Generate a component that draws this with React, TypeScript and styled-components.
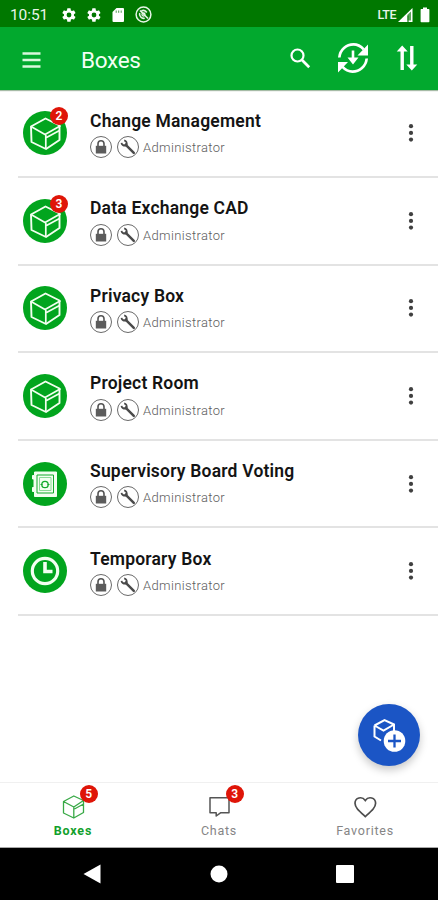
import React from 'react';
import styled, { createGlobalStyle } from 'styled-components';

const GlobalStyle = createGlobalStyle`
  * { box-sizing: border-box; }
  body { margin: 0; background: #fff; font-family: Roboto, "Liberation Sans", sans-serif; }
  svg { display: block; flex: none; }
`;

const Screen = styled.div`
  width: 438px;
  height: 900px;
  display: flex;
  flex-direction: column;
  position: relative;
  overflow: hidden;
  background: #fff;
`;

const StatusBar = styled.div`
  height: 27px;
  flex: none;
  display: flex;
  align-items: center;
  padding: 2px 8px 0 10px;
  background: #007800;
  color: #e9f5e9;
  font-size: 15.5px;
  letter-spacing: -0.1px;
`;

const StatusIcons = styled.div`
  display: flex;
  align-items: center;
  gap: 8.5px;
  margin-left: 13px;
`;

const SignalGroup = styled.div`
  display: flex;
  align-items: center;
  margin-left: auto;
  font-size: 12.5px;
  font-weight: 500;
  letter-spacing: -0.5px;
`;

const SignalSlot = styled.span`
  margin: 0 7px 0 2px;
`;

const AppBar = styled.header`
  height: 62.5px;
  flex: none;
  display: flex;
  align-items: center;
  padding: 0 20px 0 22px;
  background: #02a92e;
  color: #f4fff4;
  box-shadow: 0 1px 1px rgba(0, 60, 0, 0.35);
  z-index: 1;
`;

const AppTitle = styled.h1`
  margin: 3px 0 0 40px;
  font-size: 22.5px;
  font-weight: 450;
  letter-spacing: -0.3px;
  flex: 1;
`;

const Actions = styled.div`
  display: flex;
  align-items: center;
`;

const MenuSlot = styled.div`
  margin-top: 3px;
`;

const SearchSlot = styled.div`
  margin-right: 26px;
`;

const SyncSlot = styled.div`
  margin-right: 27px;
`;

const List = styled.ul`
  flex: 1;
  margin: 0;
  padding: 1px 0 0 18px;
  list-style: none;
`;

const Row = styled.li`
  height: 87.6px;
  display: flex;
  align-items: center;
  padding: 0 18px 0 5px;
  border-bottom: 2px solid #e3e3e3;
`;

const Avatar = styled.div`
  position: relative;
  width: 44px;
  height: 44px;
  border-radius: 50%;
  background: #02a51e;
`;

const Badge = styled.span<{ $top: number; $left: number }>`
  position: absolute;
  top: ${(p) => p.$top}px;
  left: ${(p) => p.$left}px;
  width: 18px;
  height: 18px;
  border-radius: 50%;
  background: #df1508;
  color: #fff;
  font-size: 12px;
  font-weight: 600;
  line-height: 18px;
  text-align: center;
`;

const RowBody = styled.div`
  flex: 1;
  margin-left: 23px;
  padding-top: 1px;
`;

const RowTitle = styled.div`
  font-size: 17.5px;
  font-weight: 600;
  line-height: 22px;
  letter-spacing: 0.2px;
  color: #141414;
`;

const Meta = styled.div`
  display: flex;
  align-items: center;
  margin-top: 4.5px;
  color: #5c5c5c;
  font-size: 13px;
  font-weight: 300;
  letter-spacing: 0.35px;
`;

const MetaIcon = styled.span`
  width: 22px;
  height: 22px;
  margin-right: 5px;
  border: 1px solid #6a6a6a;
  border-radius: 50%;
  display: grid;
  place-items: center;
`;

const Role = styled.span`
  margin: 1px 0 0 -1px;
`;

const MoreSlot = styled.span`
  margin-right: 6px;
`;

const Fab = styled.button`
  position: absolute;
  left: 358px;
  top: 704px;
  width: 62px;
  height: 62px;
  padding: 0;
  border: 0;
  border-radius: 50%;
  background: #1b55c5;
  box-shadow: 0 4px 8px rgba(0, 0, 0, 0.22);
`;

const TabBar = styled.nav`
  height: 66px;
  flex: none;
  display: grid;
  grid-template-columns: repeat(3, 1fr);
  border-top: 1px solid #f0f0f0;
  border-bottom: 1px solid #a8a8a8;
`;

const Tab = styled.div<{ $active?: boolean }>`
  display: flex;
  flex-direction: column;
  align-items: center;
  padding-top: 11px;
  font-size: 12.5px;
  line-height: 16px;
  letter-spacing: ${(p) => (p.$active ? 0.8 : 0.75)}px;
  font-weight: ${(p) => (p.$active ? 700 : 400)};
  color: ${(p) => (p.$active ? '#12a02c' : '#858585')};
`;

const TabIcon = styled.div`
  position: relative;
  width: 26px;
  height: 26px;
  margin-bottom: 3px;
`;

const SystemNav = styled.div`
  height: 52px;
  flex: none;
  display: flex;
  align-items: center;
  justify-content: space-between;
  padding: 0 84px 0 83px;
  background: #000;
`;

const Gear = () => (
  <svg width="16" height="16" viewBox="0 0 24 24" fill="#fff">
    <path d="M19.4 13a7.6 7.6 0 0 0 0-2l2.1-1.6a.5.5 0 0 0 .1-.7l-2-3.400a.5.5 0 0 0-.6-.2l-2.500 1a7.300 7.300 0 0 0-1.700-1L14.400 2.400a.5.5 0 0 0-.5-.4h-4a.5.5 0 0 0-.5.400L9 5.100a7.300 7.300 0 0 0-1.700 1l-2.500-1a.5.5 0 0 0-.6.2l-2 3.400a.5.5 0 0 0 .1.700L4.500 11a7.600 7.600 0 0 0 0 2l-2.200 1.600a.5.5 0 0 0-.1.700l2 3.400c.1.200.4.300.6.200l2.500-1a7.300 7.300 0 0 0 1.700 1l.4 2.700c0 .2.200.4.500.4h4c.2 0 .5-.2.500-.4l.4-2.700a7.300 7.300 0 0 0 1.700-1l2.500 1c.2.100.5 0 .6-.2l2-3.400a.5.5 0 0 0-.1-.7zM12 15.600a3.600 3.600 0 1 1 0-7.200 3.600 3.600 0 0 1 0 7.200z" />
  </svg>
);

const SdCard = () => (
  <svg width="16" height="16" viewBox="0 0 16 16">
    <path d="M6.500 1H13q1 0 1 1v12q0 1-1 1H3.500q-1 0-1-1V5z" fill="#fff" />
    <path d="M6.200 3.500v2.300M8.700 3.500v2.300M11.200 3.500v2.300" stroke="#4d994d" strokeWidth="1" />
  </svg>
);

const NoSync = () => (
  <svg width="17" height="17" viewBox="0 0 17 17" fill="none" stroke="#e6f5e6">
    <circle cx="8.500" cy="8.500" r="7.400" strokeWidth="1.500" />
    <path d="M5 4.500l8 8M11.800 6.500A4.200 4.200 0 0 0 6.500 4.800M4.700 7a4.200 4.200 0 0 0 5 5.200" strokeWidth="1.600" />
    <circle cx="8.500" cy="8.500" r="1.500" strokeWidth="1.300" />
  </svg>
);

const Signal = () => (
  <svg width="15" height="14" viewBox="0 0 15 14">
    <path d="M0 14L14.500 0v14z" fill="#fff" />
    <path d="M9.500 6.800L13 3.500V12.500H9.500z" fill="#5ba55b" />
    <path d="M10 7.500v6.500" stroke="#167f16" strokeWidth="1.200" />
  </svg>
);

const Battery = () => (
  <svg width="10" height="16" viewBox="0 0 10 16">
    <path d="M3 .5h4v1.500h1.800q.6 0 .6.800v11.700q0 .8-.8.800H1.400q-.8 0-.8-.8V2.800q0-.8.6-.8H3z" fill="#fff" />
  </svg>
);

const MenuIcon = () => (
  <svg width="19" height="18" viewBox="0 0 19 18">
    <path d="M0.500 2.500h18M0.500 9h18M0.500 15.500h18" stroke="#d9f8dc" strokeWidth="2.300" />
  </svg>
);

const SearchIcon = () => (
  <svg width="22" height="22" viewBox="0 0 22 22" fill="none" stroke="#fff">
    <circle cx="8.500" cy="8.500" r="6" strokeWidth="2.200" />
    <path d="M13 13l7.200 7.200" strokeWidth="2.700" />
  </svg>
);

const SyncIcon = () => (
  <svg width="32" height="32" viewBox="0 0 32 32">
    <g fill="none" stroke="#fff" strokeWidth="2.700">
      <path d="M2.300 15.500C3 7.500 9.500 2.300 16.500 2.300c4.300 0 7.500 2 10.200 5" />
      <path d="M29.700 16.500C29 24.500 22.500 29.700 15.500 29.700c-4.300 0-7.500-2-10.200-5" />
      <path d="M16 8.500v9" strokeWidth="2.600" />
    </g>
    <path d="M31 2.500V13.500H20.500zM1 30.500V20H11zM10.500 15.500h11L16 22.500z" fill="#fff" />
  </svg>
);

const SortIcon = () => (
  <svg width="22" height="26" viewBox="0 0 22 26">
    <path d="M6.200 25V4M15.800 1v21" stroke="#fff" strokeWidth="3.400" fill="none" />
    <path d="M6.200 .5l5.500 6H.7zM15.800 25.500l5.500-6h-11z" fill="#fff" />
  </svg>
);

const BoxGlyph = () => (
  <svg width="44" height="44" viewBox="0 0 44 44" fill="none" stroke="#f3fff0" strokeWidth="1.700" strokeLinejoin="round">
    <path d="M8 15.500L22.500 7.500 36.500 14.500V29L23 38 8.500 31z" strokeWidth="1.900" />
    <path d="M8 15.500L22 23.500 37.500 14.800M22.800 24v13.500M23.500 26.500L36.500 19.500" />
  </svg>
);

const SafeGlyph = () => (
  <svg width="44" height="44" viewBox="0 0 44 44" fill="none">
    <path d="M11.500 10H33.500v24.500H11.500V29.500H9.500V25.500H11V17H9.500V13.500H11.500z" fill="#f3fff0" stroke="#f3fff0" strokeLinejoin="round" />
    <path d="M14 13h16.500v18H14z" stroke="#12a92b" strokeWidth="1" />
    <path d="M16.500 15.500h11.500v13H16.500z" stroke="#8bd996" strokeWidth="1" />
    <circle cx="22" cy="22.500" r="3.200" stroke="#12a92b" strokeWidth="1.300" />
    <path d="M17.500 22.500h2M24.500 22.500h2" stroke="#12a92b" />
  </svg>
);

const ClockGlyph = () => (
  <svg width="44" height="44" viewBox="0 0 44 44" fill="none" stroke="#f3fff0">
    <circle cx="22" cy="22" r="12.700" strokeWidth="3.200" />
    <path d="M22 13v9.500h7.500" strokeWidth="3.600" />
  </svg>
);

const Lock = () => (
  <svg width="14" height="14" viewBox="0 0 14 14">
    <path d="M4 7V3.800a3 3 0 0 1 6 0V7" fill="none" stroke="#555" strokeWidth="1.600" />
    <path d="M1.800 5.800h10.400v7.700H1.800z" fill="#5c5c5c" />
  </svg>
);

const Wrench = () => (
  <svg width="16" height="16" viewBox="0 0 16 16" fill="none" stroke="#4a4a4a">
    <path d="M5.800 5.800l8 8" strokeWidth="2.500" strokeLinecap="round" />
    <path d="M1.500 3.800a3.200 3.200 0 0 0 4.300 2.600M4.200 1.300a3.200 3.200 0 0 1 2.300 4.300" strokeWidth="1.800" />
    <path d="M5 6.500L7 4.500" strokeWidth="2.200" />
  </svg>
);

const More = () => (
  <svg width="6" height="20" viewBox="0 0 6 20" fill="#404040">
    <circle cx="3" cy="3.200" r="2.100" />
    <circle cx="3" cy="9.900" r="2.100" />
    <circle cx="3" cy="16.600" r="2.100" />
  </svg>
);

const AddBoxIcon = () => (
  <svg width="62" height="62" viewBox="0 0 62 62" fill="none" stroke="#fff">
    <path d="M16.500 21.500L26.500 16 36 20.500V27M16.500 21.500V32.500L23 36.500M16.500 21.500L25.500 26.500 36 20.500" strokeWidth="2" />
    <circle cx="36.500" cy="37" r="10.800" fill="#fff" stroke="none" />
    <path d="M36.500 30.500v13M30 37h13" stroke="#1b55c5" strokeWidth="2.300" />
  </svg>
);

const TabBox = () => (
  <svg width="26" height="26" viewBox="0 0 26 26" fill="none" stroke="#38a946" strokeWidth="1.300" strokeLinejoin="round">
    <path d="M3.500 7.500L13.800 2 23.500 6.500V18.500L13.800 24 3.500 19zM3.500 7.500L13.800 13 23.500 6.500M13.800 13v11M14.500 15L23.500 10" />
  </svg>
);

const TabChat = () => (
  <svg width="26" height="26" viewBox="0 0 26 26" fill="none" stroke="#555" strokeWidth="1.500" strokeLinejoin="round">
    <path d="M4 3.800h19v15H14.500L10.200 22v-3.200H4z" />
  </svg>
);

const TabHeart = () => (
  <svg width="26" height="26" viewBox="0 0 26 26" fill="none" stroke="#4d4d4d" strokeWidth="1.700">
    <path d="M13.300 22.500C7 16.800 3 13.500 3 9.300 3 3.600 10 1.800 13.300 6.500 16.600 1.800 23.600 3.600 23.600 9.300c0 4.200-4 7.500-10.300 13.200z" />
  </svg>
);

const BackIcon = () => (
  <svg width="18" height="20" viewBox="0 0 18 20"><path d="M.5 10L17.500.5v19z" fill="#fff" /></svg>
);
const HomeIcon = () => (
  <svg width="18" height="18" viewBox="0 0 18 18"><circle cx="9" cy="9" r="8.500" fill="#fff" /></svg>
);
const RecentIcon = () => (
  <svg width="18" height="18" viewBox="0 0 18 18"><rect width="18" height="18" rx="1" fill="#fff" /></svg>
);

const boxes = [
  { name: 'Change Management', Glyph: BoxGlyph, count: 2 },
  { name: 'Data Exchange CAD', Glyph: BoxGlyph, count: 3 },
  { name: 'Privacy Box', Glyph: BoxGlyph },
  { name: 'Project Room', Glyph: BoxGlyph },
  { name: 'Supervisory Board Voting', Glyph: SafeGlyph },
  { name: 'Temporary Box', Glyph: ClockGlyph },
];

export default function App() {
  return (
    <Screen>
      <GlobalStyle />
      <StatusBar>
        10:51
        <StatusIcons><Gear /><Gear /><SdCard /><NoSync /></StatusIcons>
        <SignalGroup>LTE<SignalSlot><Signal /></SignalSlot><Battery /></SignalGroup>
      </StatusBar>
      <AppBar>
        <MenuSlot><MenuIcon /></MenuSlot>
        <AppTitle>Boxes</AppTitle>
        <Actions>
          <SearchSlot><SearchIcon /></SearchSlot>
          <SyncSlot><SyncIcon /></SyncSlot>
          <SortIcon />
        </Actions>
      </AppBar>
      <List>
        {boxes.map(({ name, Glyph, count }) => (
          <Row key={name}>
            <Avatar>
              <Glyph />
              {count && <Badge $top={-4} $left={27}>{count}</Badge>}
            </Avatar>
            <RowBody>
              <RowTitle>{name}</RowTitle>
              <Meta>
                <MetaIcon><Lock /></MetaIcon>
                <MetaIcon><Wrench /></MetaIcon>
                <Role>Administrator</Role>
              </Meta>
            </RowBody>
            <MoreSlot><More /></MoreSlot>
          </Row>
        ))}
      </List>
      <TabBar>
        <Tab $active><TabIcon><TabBox /><Badge $top={-9} $left={20}>5</Badge></TabIcon>Boxes</Tab>
        <Tab><TabIcon><TabChat /><Badge $top={-9} $left={20}>3</Badge></TabIcon>Chats</Tab>
        <Tab><TabIcon><TabHeart /></TabIcon>Favorites</Tab>
      </TabBar>
      <SystemNav><BackIcon /><HomeIcon /><RecentIcon /></SystemNav>
      <Fab aria-label="Add box"><AddBoxIcon /></Fab>
    </Screen>
  );
}
